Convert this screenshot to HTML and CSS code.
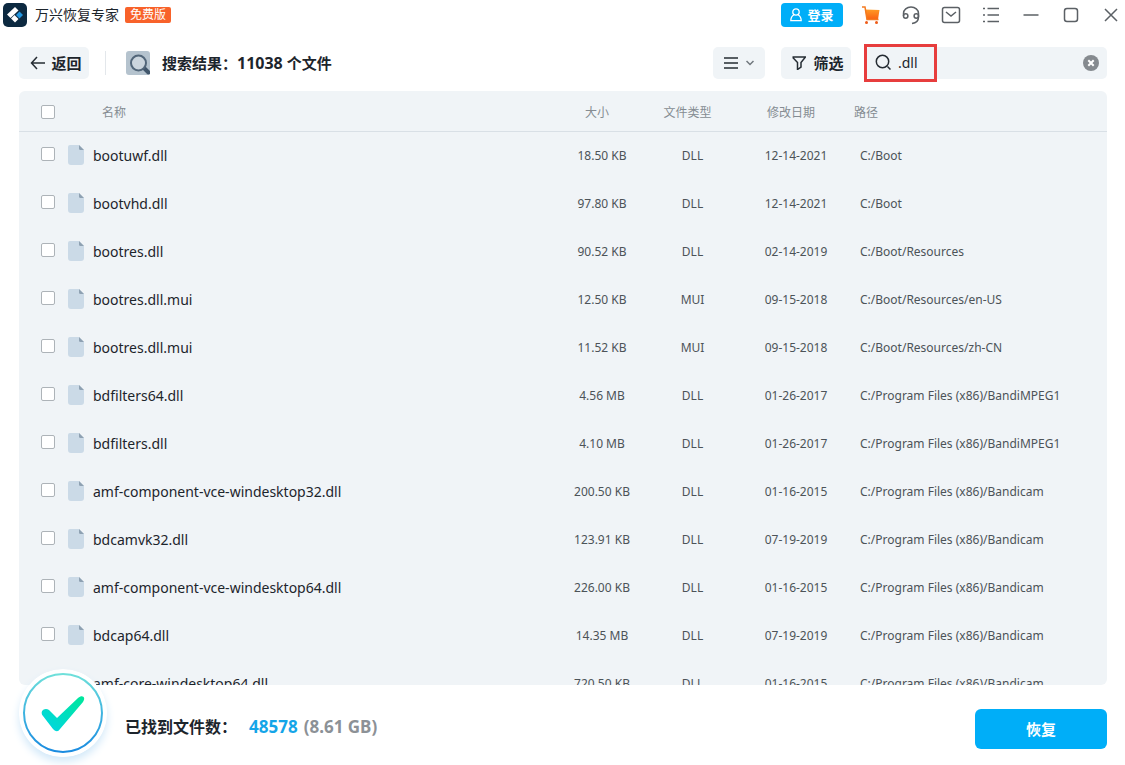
FILE: index.html
```html
<!DOCTYPE html>
<html lang="zh-CN">
<head>
<meta charset="utf-8">
<title>万兴恢复专家</title>
<link rel="stylesheet" href="styles.css">
</head>
<body>
<svg class="defs" width="0" height="0" aria-hidden="true">
  <symbol id="file" viewBox="0 0 16 20"><path d="M2 0h9l5 5v12a3 3 0 0 1-3 3H3a3 3 0 0 1-3-3V2a2 2 0 0 1 2-2z" fill="#cbdae7"/><path d="M11 0l5 5h-3.500a1.500 1.500 0 0 1-1.500-1.500z" fill="#8ea1b2"/></symbol>
</svg>
<header class="titlebar">
  <svg class="logo" viewBox="0 0 24 24"><rect width="24" height="24" rx="5" fill="#0c2940"/><path d="M12 4l3.500 3.500-8 7.500L4 11.500z" fill="#fff"/><path d="M11.500 12l4 4-3.500 3.500L8 15.500z" fill="#fff"/><path d="M16.500 8.500l3.500 3.500-3.500 3.500-3.500-3.500z" fill="#2296df"/></svg>
  <h1 class="app-name">万兴恢复专家</h1>
  <span class="edition">免费版</span>
  <nav class="window-tools">
    <button class="login"><svg width="12" height="14" viewBox="0 0 12 14" fill="none" stroke="#fff" stroke-width="1.300"><circle cx="6" cy="4" r="3.200"/><path d="M3.800 7C1.800 8 .8 10 .8 12.700h10.400C11.200 10 10.200 8 8.200 7"/></svg>登录</button>
    <button class="tool" aria-label="购物车"><svg width="20" height="20" viewBox="0 0 20 20"><defs><linearGradient id="cart" x1="0" y1="0" x2="0" y2="1"><stop offset="0" stop-color="#ff9a25"/><stop offset="1" stop-color="#fa6011"/></linearGradient></defs><path d="M4 4.500L18.500 5l-1.500 9.500H6z" fill="url(#cart)"/><path class="cart-frame" d="M1 2h3l2 12.500h11.500"/><circle cx="5.500" cy="17.500" r="1.500" fill="#ee5b18"/><circle cx="15.500" cy="17.500" r="1.500" fill="#ee5b18"/></svg></button>
    <button class="tool" aria-label="客服"><svg width="20" height="20" viewBox="0 0 20 20"><path d="M2.500 11V8.500a7.500 6.500 0 0 1 15 0V12c0 3.500-2.500 6-6.500 6.500"/><circle cx="4.700" cy="11" r="2.200"/><circle cx="15.300" cy="11" r="2.200"/></svg></button>
    <button class="tool" aria-label="消息"><svg width="20" height="20" viewBox="0 0 20 20"><rect x="1.500" y="2.500" width="17" height="15" rx="2"/><path d="M5 7l5 4 5-4"/></svg></button>
    <button class="tool" aria-label="菜单"><svg width="20" height="20" viewBox="0 0 20 20"><path d="M6.500 3.500H18M6.500 10H18M6.500 16.500H18M2 3.500h2M2 10h2M2 16.500h2"/></svg></button>
    <button class="tool" aria-label="最小化"><svg width="20" height="20" viewBox="0 0 20 20"><path d="M2.500 10h15"/></svg></button>
    <button class="tool" aria-label="最大化"><svg width="20" height="20" viewBox="0 0 20 20"><rect x="3.500" y="3.500" width="13" height="13" rx="2.500"/></svg></button>
    <button class="tool" aria-label="关闭"><svg width="20" height="20" viewBox="0 0 20 20"><path d="M4 4l12 12M16 4L4 16"/></svg></button>
  </nav>
</header>

<section class="toolbar">
  <button class="pill back"><svg width="16" height="16" viewBox="0 0 16 16"><path d="M15 8H1.500M7 2L1.500 8 7 14"/></svg>返回</button>
  <span class="divider"></span>
  <svg class="result-icon" viewBox="0 0 24 24"><rect width="24" height="24" rx="3" fill="#b5c3ce"/><path d="M18 17l4.500 4.500" stroke="#41566b" stroke-width="4" stroke-linecap="round"/><circle cx="12.500" cy="12" r="7.500" fill="#cbd5dd" stroke="#526679" stroke-width="2"/></svg>
  <h2 class="result-title">搜索结果：<span class="result-count">11038</span> 个文件</h2>
  <button class="pill view" aria-label="视图"><svg width="14" height="14" viewBox="0 0 14 14"><path d="M0 2h14M0 7h14M0 12h14"/></svg><svg class="chevron" width="8" height="6" viewBox="0 0 8 6"><path d="M.5 1L4 4.500 7.500 1"/></svg></button>
  <button class="pill filter"><svg width="14" height="14" viewBox="0 0 14 14"><path d="M.5 1h13L9 6.500V11l-3.500 2.500v-7L.8 1.500"/></svg>筛选</button>
  <div class="search">
    <svg width="17" height="17" viewBox="0 0 17 17"><circle cx="7.500" cy="7.500" r="6.200"/><path d="M12.500 12.500l3 3"/></svg>
    <input class="search-input" type="text" value=".dll" aria-label="搜索">
    <button class="clear" aria-label="清除"><svg width="16" height="16" viewBox="0 0 16 16"><circle cx="8" cy="8" r="8" fill="#858a8f"/><path d="M5.300 5.300l5.400 5.400M10.700 5.300l-5.400 5.400" stroke="#fff" stroke-width="2"/></svg></button>
    <span class="highlight"></span>
  </div>
</section>

<main class="panel">
  <table class="files">
    <colgroup><col class="c-check"><col class="c-name"><col class="c-size"><col class="c-type"><col class="c-date"><col class="c-path"></colgroup>
    <thead><tr><th><input type="checkbox" aria-label="全选"></th><th class="h-name">名称</th><th class="mid">大小</th><th class="mid">文件类型</th><th class="mid">修改日期</th><th>路径</th></tr></thead>
    <tbody>
      <tr><td><input type="checkbox" aria-label="bootuwf.dll"></td><td><span class="name"><svg><use href="#file"/></svg>bootuwf.dll</span></td><td class="mid">18.50 KB</td><td class="mid">DLL</td><td class="mid">12-14-2021</td><td class="path">C:/Boot</td></tr>
      <tr><td><input type="checkbox" aria-label="bootvhd.dll"></td><td><span class="name"><svg><use href="#file"/></svg>bootvhd.dll</span></td><td class="mid">97.80 KB</td><td class="mid">DLL</td><td class="mid">12-14-2021</td><td class="path">C:/Boot</td></tr>
      <tr><td><input type="checkbox" aria-label="bootres.dll"></td><td><span class="name"><svg><use href="#file"/></svg>bootres.dll</span></td><td class="mid">90.52 KB</td><td class="mid">DLL</td><td class="mid">02-14-2019</td><td class="path">C:/Boot/Resources</td></tr>
      <tr><td><input type="checkbox" aria-label="bootres.dll.mui"></td><td><span class="name"><svg><use href="#file"/></svg>bootres.dll.mui</span></td><td class="mid">12.50 KB</td><td class="mid">MUI</td><td class="mid">09-15-2018</td><td class="path">C:/Boot/Resources/en-US</td></tr>
      <tr><td><input type="checkbox" aria-label="bootres.dll.mui"></td><td><span class="name"><svg><use href="#file"/></svg>bootres.dll.mui</span></td><td class="mid">11.52 KB</td><td class="mid">MUI</td><td class="mid">09-15-2018</td><td class="path">C:/Boot/Resources/zh-CN</td></tr>
      <tr><td><input type="checkbox" aria-label="bdfilters64.dll"></td><td><span class="name"><svg><use href="#file"/></svg>bdfilters64.dll</span></td><td class="mid">4.56 MB</td><td class="mid">DLL</td><td class="mid">01-26-2017</td><td class="path">C:/Program Files (x86)/BandiMPEG1</td></tr>
      <tr><td><input type="checkbox" aria-label="bdfilters.dll"></td><td><span class="name"><svg><use href="#file"/></svg>bdfilters.dll</span></td><td class="mid">4.10 MB</td><td class="mid">DLL</td><td class="mid">01-26-2017</td><td class="path">C:/Program Files (x86)/BandiMPEG1</td></tr>
      <tr><td><input type="checkbox" aria-label="amf-component-vce-windesktop32.dll"></td><td><span class="name"><svg><use href="#file"/></svg>amf-component-vce-windesktop32.dll</span></td><td class="mid">200.50 KB</td><td class="mid">DLL</td><td class="mid">01-16-2015</td><td class="path">C:/Program Files (x86)/Bandicam</td></tr>
      <tr><td><input type="checkbox" aria-label="bdcamvk32.dll"></td><td><span class="name"><svg><use href="#file"/></svg>bdcamvk32.dll</span></td><td class="mid">123.91 KB</td><td class="mid">DLL</td><td class="mid">07-19-2019</td><td class="path">C:/Program Files (x86)/Bandicam</td></tr>
      <tr><td><input type="checkbox" aria-label="amf-component-vce-windesktop64.dll"></td><td><span class="name"><svg><use href="#file"/></svg>amf-component-vce-windesktop64.dll</span></td><td class="mid">226.00 KB</td><td class="mid">DLL</td><td class="mid">01-16-2015</td><td class="path">C:/Program Files (x86)/Bandicam</td></tr>
      <tr><td><input type="checkbox" aria-label="bdcap64.dll"></td><td><span class="name"><svg><use href="#file"/></svg>bdcap64.dll</span></td><td class="mid">14.35 MB</td><td class="mid">DLL</td><td class="mid">07-19-2019</td><td class="path">C:/Program Files (x86)/Bandicam</td></tr>
      <tr><td><input type="checkbox" aria-label="amf-core-windesktop64.dll"></td><td><span class="name"><svg><use href="#file"/></svg>amf-core-windesktop64.dll</span></td><td class="mid">720.50 KB</td><td class="mid">DLL</td><td class="mid">01-16-2015</td><td class="path">C:/Program Files (x86)/Bandicam</td></tr>
    </tbody>
  </table>
</main>

<footer class="footer">
  <svg class="done" viewBox="0 0 88 88"><defs><linearGradient id="ring" x1="0" y1="0" x2="0" y2="1"><stop offset="0" stop-color="#6fe0da"/><stop offset=".5" stop-color="#3fb4e0"/><stop offset="1" stop-color="#1a8be0"/></linearGradient><linearGradient id="tick" x1="0" y1="1" x2="1" y2="0"><stop offset="0" stop-color="#00d5e6"/><stop offset="1" stop-color="#00e79a"/></linearGradient></defs><circle cx="44" cy="44" r="44" fill="#fff"/><circle cx="44" cy="44" r="39" fill="#fff" stroke="url(#ring)" stroke-width="2"/><path d="M24 47c-4-5 2-9 6-6l8 8 21-20c5-4 8 0 5 4L41 60c-2 3-4 3-7 0z" fill="url(#tick)"/></svg>
  <p class="found">已找到文件数：<span class="count">48578</span><span class="total">(8.61 GB)</span></p>
  <button class="recover">恢复</button>
</footer>
</body>
</html>
```
FILE: styles.css
```css
* { box-sizing: border-box; }
body {
  margin: 0;
  height: 100vh;
  display: flex;
  flex-direction: column;
  overflow: hidden;
  background: #fff;
  color: #1d252c;
  font: 14px/20px "Noto Sans", "Noto Sans CJK SC", sans-serif;
}
button { border: 0; padding: 0; background: none; font: inherit; color: inherit; }
h1, h2, p { margin: 0; }
.defs { position: absolute; }

.titlebar { display: flex; align-items: center; height: 30px; padding: 0 4px 0 3px; }
.logo { width: 24px; height: 24px; margin-right: 8px; }
.app-name { font-size: 14px; font-weight: 400; }
.edition { margin-left: 6px; padding: 0 5px; border-radius: 2px; background: #f8622a; color: #fff; font-size: 12px; line-height: 16px; }
.window-tools { display: flex; align-items: center; gap: 20px; margin-left: auto; }
.login { display: flex; align-items: center; justify-content: center; gap: 5px; width: 62px; height: 24px; margin-right: -2px; border-radius: 4px; background: #00aef8; color: #fff; font-size: 13px; font-weight: 700; }
.tool { width: 20px; height: 20px; }
.tool svg { display: block; fill: none; stroke: #5b6065; stroke-width: 1.5; }
.tool path[fill], .tool circle[fill] { stroke: none; }
.tool .cart-frame { stroke: #f47a20; }

.toolbar { display: flex; align-items: center; height: 61px; padding: 4px 18px 0 19px; }
.toolbar svg { flex: none; fill: none; stroke: #252c33; stroke-width: 1.5; }
.pill { display: flex; align-items: center; justify-content: center; gap: 5px; height: 32px; border-radius: 5px; background: #f0f4f7; font-size: 15px; font-weight: 700; }
.back { width: 70px; padding-left: 4px; }
.divider { width: 1px; height: 24px; margin: 0 20px 0 16px; background: #e3e7eb; }
.toolbar .result-icon { width: 24px; height: 24px; stroke: none; }
.result-title { margin-left: 12px; font-size: 15px; font-weight: 700; }
.result-count { font-size: 16px; }
.view { width: 52px; gap: 8px; margin-left: auto; }
.toolbar .chevron { stroke: #6f767c; }
.filter { width: 70px; gap: 7px; margin: 0 14px 0 16px; padding-left: 4px; }
.search { position: relative; display: flex; align-items: center; width: 242px; height: 32px; padding: 0 8px 0 10px; border-radius: 5px; background: #f0f4f7; }
.search-input { flex: 1; min-width: 0; margin-left: 6px; padding: 0; border: 0; outline: 0; background: none; color: #1d252c; font: inherit; }
.clear { width: 16px; height: 16px; }
.toolbar .clear svg { display: block; stroke: none; }
.highlight { position: absolute; inset: -3px auto -3px -1px; width: 73px; border: 3px solid #e73d3d; }

.panel { flex: 1; min-height: 0; margin: 0 18px 0 19px; overflow: hidden; border-radius: 6px; background: #f0f4f7; }
.files { width: 100%; border-collapse: separate; border-spacing: 0; table-layout: fixed; color: #4c5358; font-size: 12px; }
.c-check { width: 49px; }
.c-size { width: 90px; }
.c-type { width: 91px; }
.c-date { width: 116px; }
.c-path { width: 253px; }
.files th { height: 41px; padding: 3px 0 0; border-bottom: 1px solid #d9e0e6; color: #858c92; font-weight: 400; text-align: left; }
.files td { height: 48px; padding: 0; white-space: nowrap; }
.files .mid { text-align: center; }
.files th.mid { padding-right: 10px; }
.files th.h-name { padding-left: 34px; }
.files .path { padding-left: 6px; }
.files input { appearance: none; display: block; width: 14px; height: 14px; margin: 0 0 4px 22px; border: 1px solid #adb3b8; border-radius: 2px; background: #fff; }
.files th input { margin-bottom: 2px; }
.name { display: flex; align-items: center; gap: 9px; color: #1d252c; font-size: 14px; }
.name svg { width: 16px; height: 20px; flex: none; margin-bottom: 2px; }

.footer { display: flex; align-items: center; height: 80px; padding: 0 18px 0 19px; }
.done { position: relative; flex: none; width: 88px; height: 88px; margin: -24px 0 0; border-radius: 50%; box-shadow: 0 5px 8px #d3e9f9; }
.found { margin: 3px 0 0 18px; font-size: 16px; font-weight: 700; }
.count, .total { font-size: 17px; }
.count { margin: 0 6px 0 12px; color: #14a5e8; }
.total { color: #8c9196; }
.recover { width: 132px; height: 40px; margin: 8px 0 0 auto; border-radius: 6px; background: #00aef8; color: #fff; font-size: 15px; font-weight: 700; }
```
